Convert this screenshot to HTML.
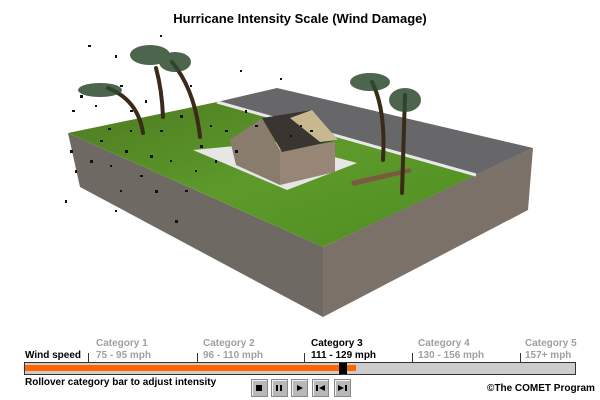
<!DOCTYPE html>
<html><head><meta charset="utf-8"><style>
body{margin:0;width:600px;height:400px;background:#fff;overflow:hidden;position:relative;font-family:"Liberation Sans",Arial,sans-serif}
.t{position:absolute;font-size:10px;font-weight:bold;white-space:nowrap}
.g{color:#a0a0a0}
.btn{position:absolute;top:379px;width:15px;height:16px;background:#b8b8b8;border:1px solid #888;box-shadow:inset 1px 1px 0 #eee}
</style></head><body>
<svg width="600" height="400" style="position:absolute;left:0;top:0">
<defs><linearGradient id="gr" x1="0" y1="0" x2="1" y2="1"><stop offset="0" stop-color="#4e7a22"/><stop offset="0.5" stop-color="#5d9a2a"/><stop offset="1" stop-color="#4f8d22"/></linearGradient></defs>
<polygon points="68,133 323,247 323,317 80,187" fill="#6e6963"/>
<polygon points="323,247 533,148 528,210 323,317" fill="#7b7168"/>
<polygon points="68,133 217,102 476,175 323,247" fill="url(#gr)"/>
<polygon points="217,102 277,88 533,148 476,175" fill="#67676a"/>
<polyline points="217,102 476,175" stroke="#e8e8e8" stroke-width="3" fill="none"/>
<polygon points="193,150 278,142 357,163 287,190" fill="#e6e6e6"/>
<polygon points="230,140 262,118 280,150 280,185 236,165" fill="#8a7c6c"/>
<polygon points="280,150 335,142 335,172 280,185" fill="#978676"/>
<polygon points="262,118 312,110 338,140 282,152" fill="#3a3530"/>
<polygon points="290,118 312,110 338,140 320,142" fill="#c8b890"/>
<polygon points="351,181 410,168 412,172 353,186" fill="#7a5a40"/>
<g fill="none" stroke="#3a2a1a" stroke-linecap="round">
<path d="M143,133 Q138,100 108,88" stroke-width="4"/>
<path d="M163,117 Q162,90 156,68" stroke-width="4"/>
<path d="M200,137 Q195,90 172,62" stroke-width="4"/>
<path d="M383,160 Q386,110 372,82" stroke-width="4"/>
<path d="M402,193 Q404,130 405,95" stroke-width="4"/>
</g>
<g fill="#2e4a2e" opacity="0.85">
<ellipse cx="100" cy="90" rx="22" ry="7"/>
<ellipse cx="150" cy="55" rx="20" ry="10"/>
<ellipse cx="175" cy="62" rx="16" ry="10"/>
<ellipse cx="370" cy="82" rx="20" ry="9"/>
<ellipse cx="405" cy="100" rx="16" ry="12"/>
</g>
<g fill="#111">
<rect x="88" y="45" width="3" height="2"/><rect x="115" y="55" width="2" height="3"/><rect x="120" y="85" width="3" height="2"/><rect x="80" y="95" width="3" height="3"/><rect x="72" y="110" width="3" height="2"/><rect x="95" y="105" width="2" height="2"/><rect x="130" y="110" width="3" height="2"/><rect x="145" y="100" width="2" height="3"/><rect x="160" y="130" width="3" height="2"/><rect x="180" y="115" width="3" height="3"/><rect x="100" y="140" width="3" height="2"/><rect x="90" y="160" width="3" height="3"/><rect x="110" y="165" width="2" height="2"/><rect x="125" y="150" width="3" height="3"/><rect x="140" y="175" width="3" height="2"/><rect x="75" y="170" width="2" height="3"/><rect x="70" y="150" width="3" height="3"/><rect x="150" y="155" width="3" height="3"/><rect x="170" y="160" width="2" height="2"/><rect x="185" y="190" width="3" height="2"/><rect x="200" y="145" width="3" height="3"/><rect x="210" y="125" width="2" height="2"/><rect x="225" y="130" width="3" height="2"/><rect x="245" y="110" width="2" height="3"/><rect x="255" y="125" width="3" height="2"/><rect x="120" y="190" width="2" height="2"/><rect x="175" y="220" width="3" height="3"/><rect x="115" y="210" width="2" height="2"/><rect x="65" y="200" width="2" height="3"/><rect x="235" y="150" width="3" height="3"/><rect x="195" y="170" width="2" height="2"/><rect x="155" y="190" width="3" height="3"/><rect x="240" y="70" width="2" height="2"/><rect x="280" y="78" width="2" height="2"/><rect x="160" y="35" width="2" height="2"/><rect x="190" y="85" width="2" height="2"/><rect x="130" y="130" width="2" height="2"/><rect x="108" y="128" width="3" height="2"/><rect x="215" y="160" width="2" height="3"/><rect x="300" y="125" width="2" height="2"/><rect x="310" y="130" width="3" height="2"/><rect x="290" y="135" width="2" height="2"/>
</g>
</svg>
<div style="position:absolute;top:11px;left:0;width:600px;text-align:center;font-weight:bold;font-size:13px">Hurricane Intensity Scale (Wind Damage)</div>
<div class="t" style="left:25px;top:350px">Wind speed</div>
<div class="t g" style="left:96px;top:338px">Category 1</div><div class="t g" style="left:96px;top:350px">75 - 95 mph</div>
<div class="t g" style="left:203px;top:338px">Category 2</div><div class="t g" style="left:203px;top:350px">96 - 110 mph</div>
<div class="t" style="left:311px;top:338px">Category 3</div><div class="t" style="left:311px;top:350px">111 - 129 mph</div>
<div class="t g" style="left:418px;top:338px">Category 4</div><div class="t g" style="left:418px;top:350px">130 - 156 mph</div>
<div class="t g" style="left:525px;top:338px">Category 5</div><div class="t g" style="left:525px;top:350px">157+ mph</div>
<div style="position:absolute;left:88px;top:353px;width:1px;height:9px;background:#333"></div>
<div style="position:absolute;left:197px;top:353px;width:1px;height:9px;background:#333"></div>
<div style="position:absolute;left:304px;top:353px;width:1px;height:9px;background:#333"></div>
<div style="position:absolute;left:412px;top:353px;width:1px;height:9px;background:#333"></div>
<div style="position:absolute;left:520px;top:353px;width:1px;height:9px;background:#333"></div>
<div style="position:absolute;left:24px;top:362px;width:550px;height:11px;background:#cccccc;border:1px solid #333"></div>
<div style="position:absolute;left:25px;top:365px;width:331px;height:6px;background:#ff6600"></div>
<div style="position:absolute;left:339px;top:363px;width:8px;height:11px;background:#000"></div>
<div class="t" style="left:25px;top:377px">Rollover category bar to adjust intensity</div>
<div class="t" style="left:487px;top:383px">©The COMET Program</div>
<div class="btn" style="left:251px"><div style="position:absolute;left:4px;top:5px;width:6px;height:6px;background:#000"></div></div>
<div class="btn" style="left:271px"><div style="position:absolute;left:4px;top:5px;width:2px;height:6px;background:#000"></div><div style="position:absolute;left:8px;top:5px;width:2px;height:6px;background:#000"></div></div>
<div class="btn" style="left:291px"><div style="position:absolute;left:5px;top:5px;border-left:6px solid #000;border-top:3px solid transparent;border-bottom:3px solid transparent"></div></div>
<div class="btn" style="left:312px"><div style="position:absolute;left:3px;top:5px;width:2px;height:6px;background:#000"></div><div style="position:absolute;left:6px;top:5px;border-right:6px solid #000;border-top:3px solid transparent;border-bottom:3px solid transparent"></div></div>
<div class="btn" style="left:334px"><div style="position:absolute;left:3px;top:5px;border-left:6px solid #000;border-top:3px solid transparent;border-bottom:3px solid transparent"></div><div style="position:absolute;left:10px;top:5px;width:2px;height:6px;background:#000"></div></div>
</body></html>
